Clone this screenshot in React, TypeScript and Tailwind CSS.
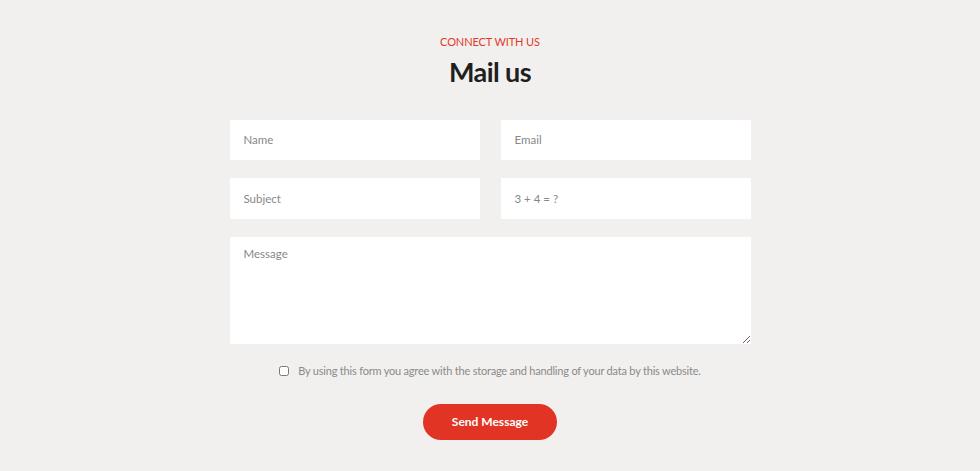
export default function App() {
  const font = { fontFamily: '"Lato", "Open Sans", sans-serif' };
  return (
    <div className="w-full h-[471px] bg-[#f1f0ee] flex flex-col items-center pt-[34px]" style={font}>
      {/* Heading */}
      <p className="text-[11px] leading-[16px] text-[#e23a2a] uppercase tracking-[-0.1px]">Connect with us</p>
      <h2 className="text-[27px] leading-[36px] font-bold text-[#1f1f1f] mt-[4px] tracking-[-0.6px]">Mail us</h2>

      {/* Form */}
      <form className="w-[521px] mt-[30px] flex flex-col">
        <div className="grid grid-cols-2 gap-x-[21px] gap-y-[18px]">
          <input placeholder="Name" className="h-[40px] bg-white px-[14px] pb-[2px] text-[11.5px] text-[#555] placeholder:text-[#888] outline-none" />
          <input placeholder="Email" className="h-[40px] bg-white px-[14px] pb-[2px] text-[11.5px] text-[#555] placeholder:text-[#888] outline-none" />
          <input placeholder="Subject" className="h-[41px] bg-white px-[14px] pb-[1px] text-[11.5px] text-[#555] placeholder:text-[#888] outline-none" />
          <input placeholder="3 + 4 = ?" className="h-[41px] bg-white px-[14px] pb-[1px] text-[11.5px] text-[#555] placeholder:text-[#888] outline-none" />
        </div>
        <textarea
          placeholder="Message"
          className="mt-[18px] h-[107px] bg-white px-[14px] pt-[8px] text-[11.5px] text-[#555] placeholder:text-[#888] outline-none"
        />

        <label className="mt-[19px] flex items-center justify-center gap-[9px] text-[11px] text-[#8a8a8a] tracking-[-0.2px]">
          <input type="checkbox" className="w-[10px] h-[10px]" />
          <span>By using this form you agree with the storage and handling of your data by this website.</span>
        </label>

        <div className="flex justify-center mt-[24px]">
          <button type="button" className="w-[134px] h-[36px] rounded-full bg-[#e23425] text-white text-[12px] font-bold">
            Send Message
          </button>
        </div>
      </form>
    </div>
  );
}
